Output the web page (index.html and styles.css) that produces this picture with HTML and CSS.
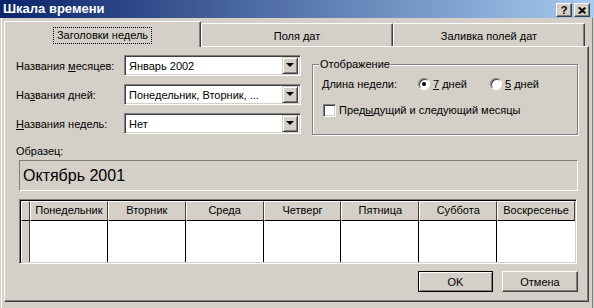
FILE: index.html
```html
<!DOCTYPE html>
<html lang="ru">
<head>
  <meta charset="UTF-8" />
  <title>Шкала времени</title>
  <link rel="stylesheet" href="styles.css">
</head>
<body>
  <div class="window">
    <div class="titlebar">
      <span class="title">Шкала времени</span>
      <div class="caption-buttons">
        <span class="cap-btn help">?</span>
        <span class="cap-btn">
          <svg width="8" height="7" viewBox="0 0 8 7">
            <path d="M0.5 0.5 L7 6.5 M1.5 0.5 L7.5 6 M7 0.5 L0.5 6.5 M7.5 1 L1.5 6.5" stroke="#000" stroke-width="1.3" fill="none"/>
          </svg>
        </span>
      </div>
    </div>

    <div class="client">
      <div class="tabs">
        <div class="tab active"><span class="focus">Заголовки недель</span></div>
        <div class="tab">Поля дат</div>
        <div class="tab">Заливка полей дат</div>
      </div>

      <div class="panel">
        <div class="top">
          <div class="fields">
            <div class="field">
              <label>Названия <u>м</u>есяцев:</label>
              <div class="combo"><span class="combo-text">Январь 2002</span><span class="combo-btn"></span></div>
            </div>
            <div class="field">
              <label>На<u>з</u>вания дней:</label>
              <div class="combo"><span class="combo-text">Понедельник, Вторник, ...</span><span class="combo-btn"></span></div>
            </div>
            <div class="field">
              <label><u>Н</u>азвания недель:</label>
              <div class="combo"><span class="combo-text">Нет</span><span class="combo-btn"></span></div>
            </div>
          </div>

          <fieldset class="group">
            <legend>Отображение</legend>
            <div class="group-row">
              <span class="week-label">Длина недели:</span>
              <span class="radio-item"><span class="radio checked"></span><span><u>7</u> дней</span></span>
              <span class="radio-item"><span class="radio"></span><span><u>5</u> дней</span></span>
            </div>
            <div class="group-row check-row">
              <span class="checkbox"></span><span>Пред<u>ы</u>дущий и следующий месяцы</span>
            </div>
          </fieldset>
        </div>

        <div class="sample-label">Образец:</div>
        <div class="sample">Октябрь 2001</div>

        <div class="grid">
          <div class="corner"></div>
          <div class="head">Понедельник</div>
          <div class="head">Вторник</div>
          <div class="head">Среда</div>
          <div class="head">Четверг</div>
          <div class="head">Пятница</div>
          <div class="head">Суббота</div>
          <div class="head">Воскресенье</div>
          <div class="row-head"></div>
          <div class="cell"></div>
          <div class="cell"></div>
          <div class="cell"></div>
          <div class="cell"></div>
          <div class="cell"></div>
          <div class="cell"></div>
          <div class="cell"></div>
        </div>

        <div class="buttons">
          <button class="btn default">OK</button>
          <button class="btn cancel">Отмена</button>
        </div>
      </div>
    </div>
  </div>
</body>
</html>
```

FILE: styles.css
```css
:root {
  --face: #d4d0c8;
  --shadow: #808080;
  --dark: #404040;
  --light: #ffffff;
}

* {
  box-sizing: border-box;
}

body {
  margin: 0;
  background: var(--face);
  font-family: 'Liberation Sans', Arial, sans-serif;
  font-size: 11px;
  color: #000;
}

.window {
  width: 594px;
  height: 308px;
  background: var(--face);
  overflow: hidden;
}

.titlebar {
  height: 18px;
  display: flex;
  justify-content: space-between;
  padding: 0 4px 0 3px;
  background: linear-gradient(to right, #0a246a, #a6caf0);
}

.title {
  color: #fff;
  font-weight: bold;
  font-size: 13px;
  line-height: 18px;
}

.caption-buttons {
  display: flex;
  gap: 2px;
  padding-top: 3px;
}

.cap-btn {
  width: 16px;
  height: 14px;
  display: flex;
  align-items: center;
  justify-content: center;
  background: var(--face);
  border: 1px solid;
  border-color: var(--light) var(--dark) var(--dark) var(--light);
  box-shadow: inset -1px -1px var(--shadow);
}

.cap-btn.help {
  font-weight: bold;
  font-size: 11px;
  line-height: 12px;
}

.client {
  width: 592px;
  height: 290px;
  margin-left: 1px;
  border-left: 1px solid var(--light);
  border-right: 1px solid var(--shadow);
}

/* tabs */

.tabs {
  height: 28px;
  display: flex;
  align-items: flex-end;
  padding-left: 2px;
}

.tab {
  width: 192px;
  height: 23px;
  padding-top: 6px;
  text-align: center;
  line-height: 13px;
  border-top: 1px solid var(--light);
  border-left: 1px solid var(--light);
  border-right: 1px solid var(--dark);
  box-shadow: inset -1px 0 var(--shadow);
  border-radius: 2px 2px 0 0;
}

.tab.active {
  width: 197px;
  height: 26px;
  margin-bottom: -1px;
  padding-top: 5px;
  position: relative;
  z-index: 1;
  background: var(--face);
}

.focus {
  display: inline-block;
  padding: 1px 3px;
  border: 1px dotted #000;
}

.panel {
  width: 585px;
  height: 256px;
  margin-left: 2px;
  padding: 8px 10px 0 11px;
  border-top: 1px solid var(--light);
  border-left: 1px solid var(--light);
  border-right: 1px solid var(--dark);
  border-bottom: 1px solid var(--dark);
  box-shadow: inset -1px -1px var(--shadow);
}

/* top part */

.top {
  height: 80px;
  display: flex;
}

.fields {
  width: 285px;
  display: flex;
  flex-direction: column;
  gap: 8px;
}

.field {
  height: 21px;
  display: flex;
  align-items: center;
}

.field label {
  width: 108px;
}

.combo {
  width: 177px;
  height: 21px;
  display: flex;
  align-items: center;
  background: #fff;
  border: 1px solid;
  border-color: var(--shadow) var(--light) var(--light) var(--shadow);
  box-shadow: inset 1px 1px var(--dark), inset -1px -1px var(--face);
  padding: 1px 2px 1px 4px;
}

.combo-text {
  flex: 1;
}

.combo-btn {
  width: 16px;
  height: 17px;
  position: relative;
  background: var(--face);
  border: 1px solid;
  border-color: var(--face) var(--dark) var(--dark) var(--face);
  box-shadow: inset 1px 1px var(--light), inset -1px -1px var(--shadow);
}

.combo-btn::after {
  content: '';
  position: absolute;
  left: 3px;
  top: 5px;
  border-left: 4px solid transparent;
  border-right: 4px solid transparent;
  border-top: 4px solid #000;
}

.group {
  width: 266px;
  height: 77px;
  margin: 3px 0 0 11px;
  padding: 6px 0 0 9px;
  border: 1px solid var(--shadow);
  box-shadow: inset 1px 1px var(--light), 1px 1px var(--light);
}

.group legend {
  padding: 0 1px;
  margin-left: -3px;
  line-height: 12px;
  background: var(--face);
}

.group-row {
  height: 16px;
  display: flex;
  align-items: center;
}

.week-label {
  width: 96px;
}

.radio-item {
  width: 72px;
  display: flex;
  align-items: center;
  gap: 3px;
}

.radio {
  width: 12px;
  height: 12px;
  position: relative;
  border-radius: 50%;
  background: #fff;
  border: 1px solid;
  border-color: var(--shadow) var(--light) var(--light) var(--shadow);
  box-shadow: inset 1px 1px var(--dark);
}

.radio.checked::after {
  content: '';
  position: absolute;
  left: 3px;
  top: 3px;
  width: 4px;
  height: 4px;
  border-radius: 50%;
  background: #000;
}

.check-row {
  margin-top: 10px;
  gap: 3px;
}

.checkbox {
  width: 13px;
  height: 13px;
  margin-left: 1px;
  background: #fff;
  border: 1px solid;
  border-color: var(--shadow) var(--light) var(--light) var(--shadow);
  box-shadow: inset 1px 1px var(--dark), inset -1px -1px var(--face);
}

/* sample */

.sample-label {
  margin-top: 10px;
  line-height: 13px;
}

.sample {
  width: 559px;
  height: 31px;
  margin: 2px 0 0 3px;
  padding-left: 3px;
  display: flex;
  align-items: center;
  font-size: 16px;
  border: 1px solid;
  border-color: var(--shadow) var(--light) var(--light) var(--shadow);
}

/* grid */

.grid {
  width: 558px;
  height: 65px;
  margin: 8px 0 0 3px;
  display: grid;
  grid-template-columns: 9px repeat(7, 1fr);
  grid-template-rows: 20px 1fr;
  border: 1px solid;
  border-color: var(--shadow) var(--light) var(--light) var(--shadow);
  box-shadow: inset 1px 1px #000, inset -1px -1px var(--face);
  padding: 1px;
  background: #fff;
}

.corner,
.head,
.row-head {
  background: var(--face);
  border-left: 1px solid var(--light);
  border-right: 1px solid var(--dark);
}

.corner,
.head {
  border-top: 1px solid var(--light);
  border-bottom: 1px solid #000;
}

.head {
  text-align: center;
  line-height: 17px;
}

.cell {
  border-right: 1px solid #000;
}

.cell:last-child {
  border-right: none;
}

/* buttons */

.buttons {
  margin-top: 7px;
  display: flex;
  justify-content: flex-end;
  gap: 9px;
}

.btn {
  width: 75px;
  height: 21px;
  padding: 0;
  font: inherit;
  color: #000;
  background: var(--face);
  border: 1px solid;
  border-color: var(--light) var(--dark) var(--dark) var(--light);
  box-shadow: inset -1px -1px var(--shadow);
}

.btn.cancel {
  width: 76px;
}

.btn.default {
  border-color: #000;
  box-shadow: inset 1px 1px var(--light), inset -1px -1px var(--shadow);
}
```
